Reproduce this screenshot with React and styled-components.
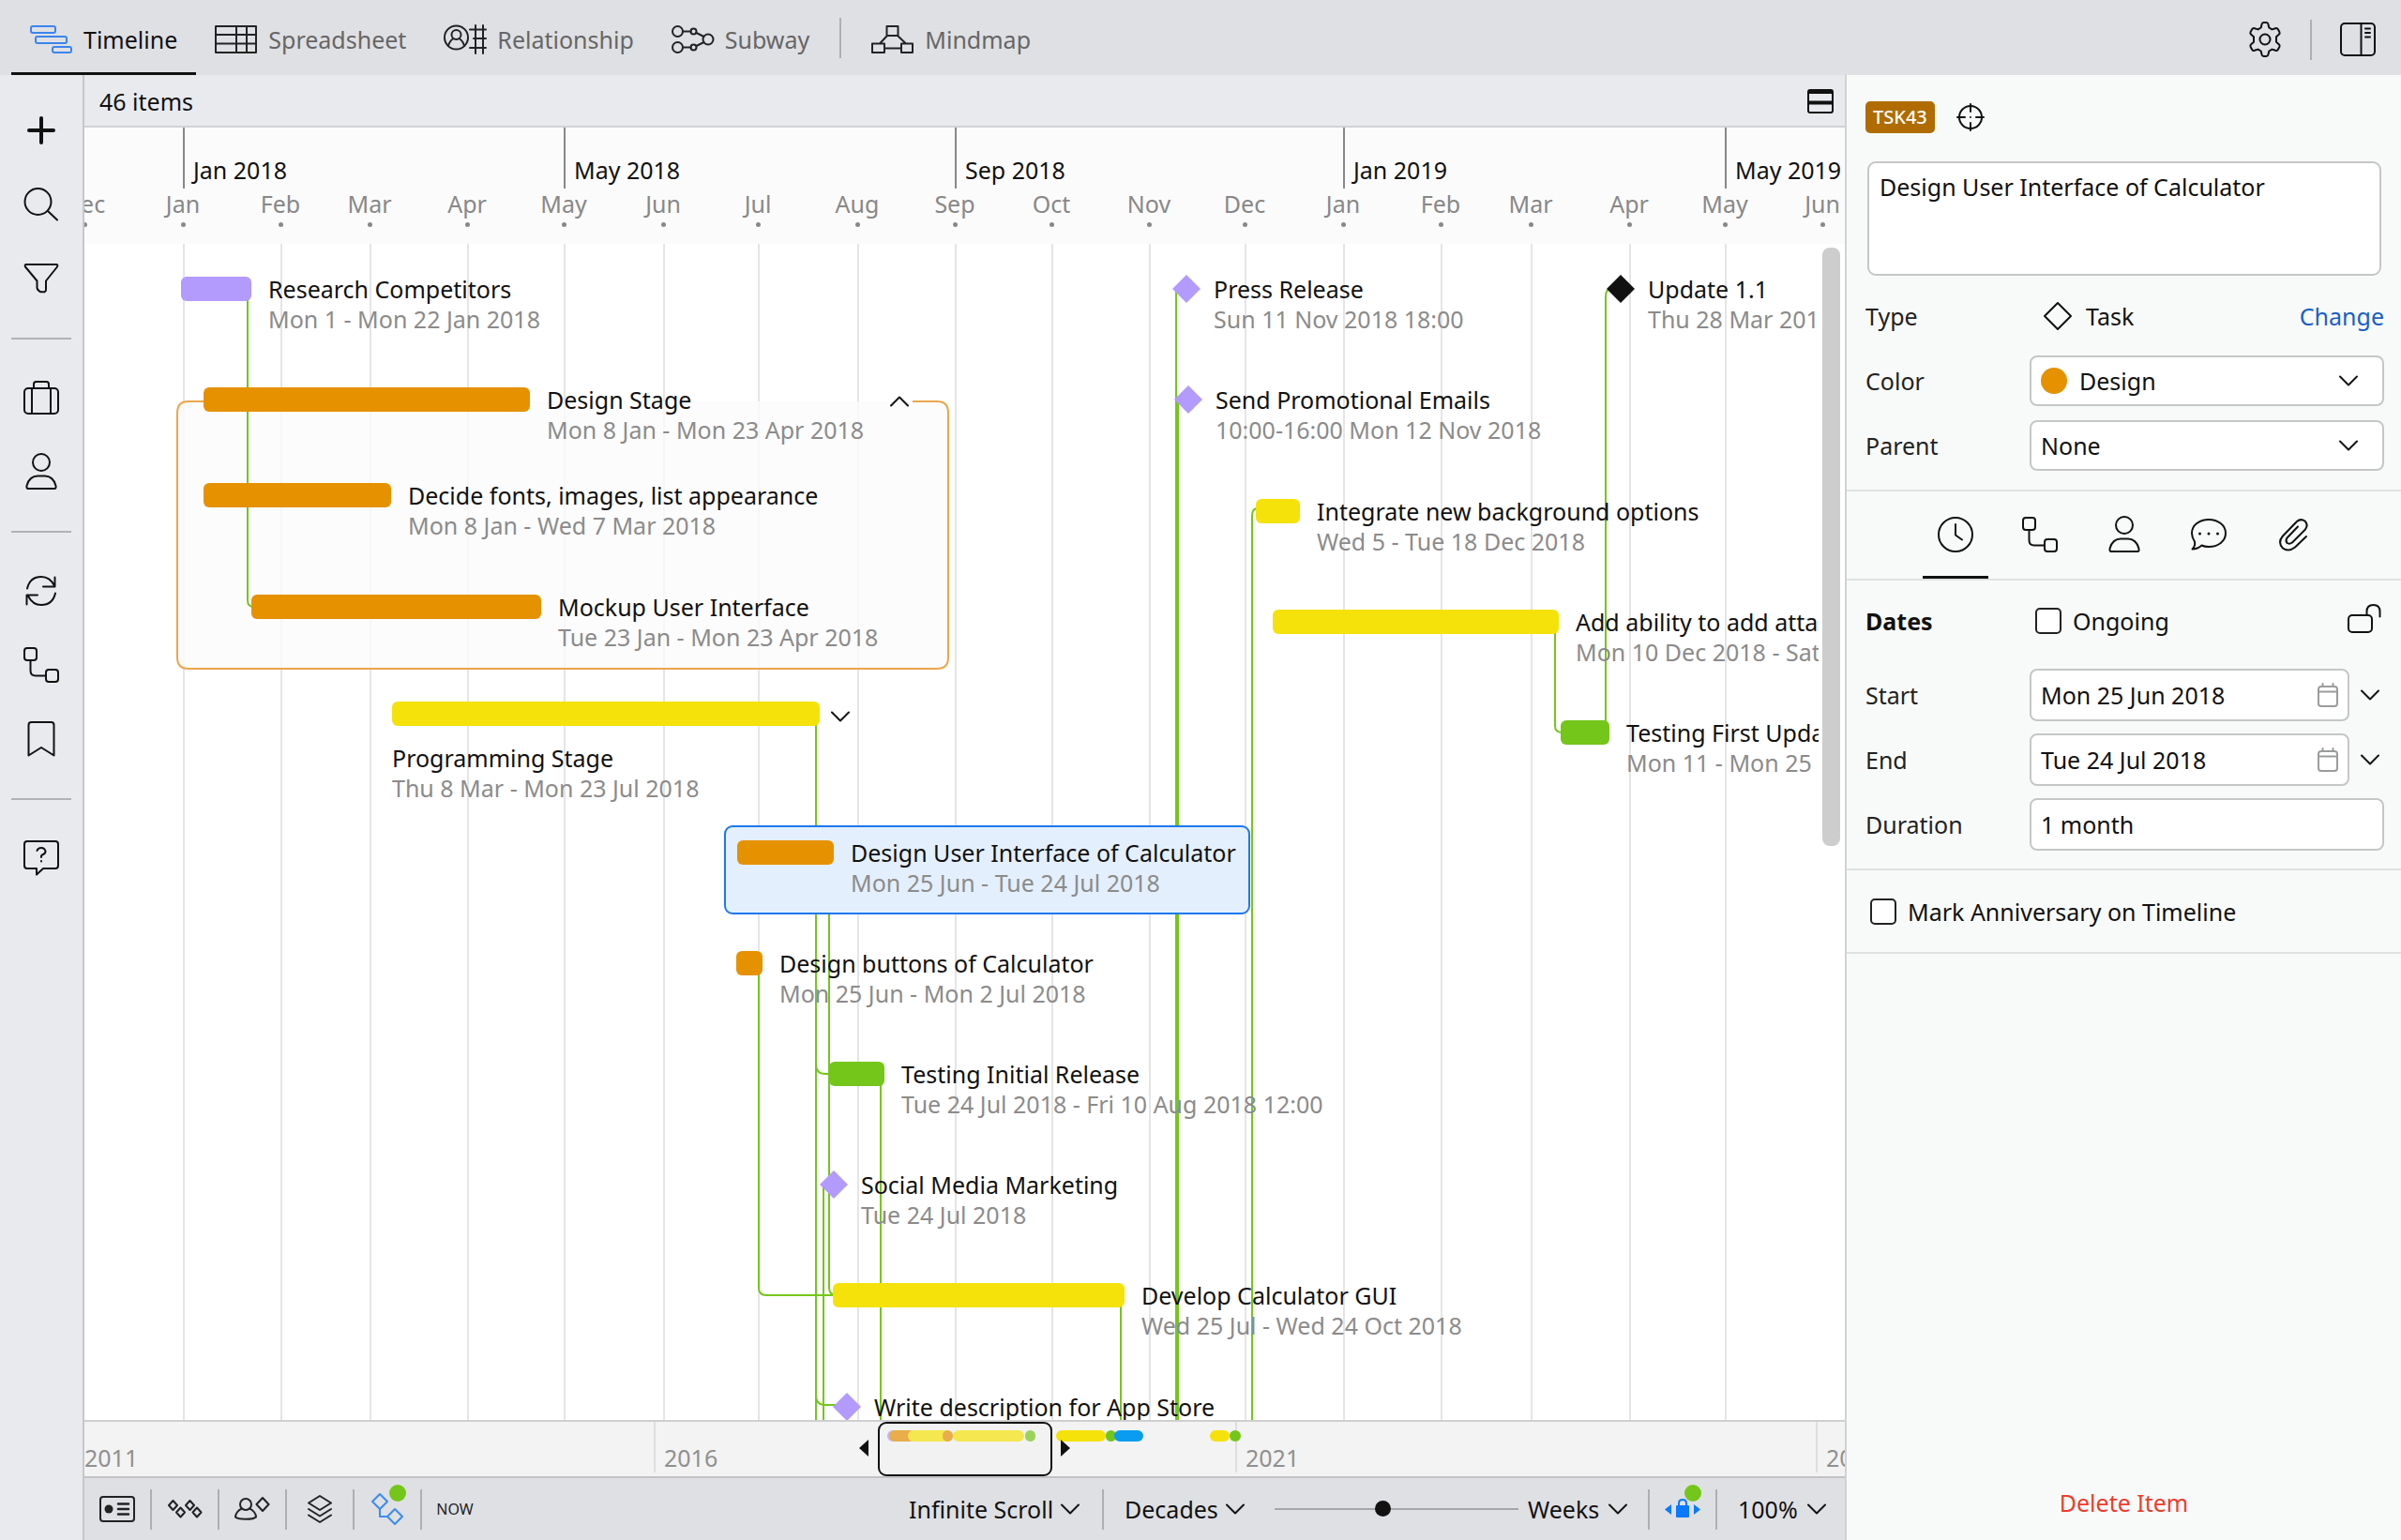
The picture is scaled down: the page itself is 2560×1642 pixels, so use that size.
import { useState } from 'react';
import styled, { createGlobalStyle, css } from 'styled-components';

const GlobalStyle = createGlobalStyle`
    * {
        box-sizing: border-box;
    }
    body {
        margin: 0;
        background: #f8faf9;
        color: #111;
        font-family: 'Noto Sans', 'Open Sans', sans-serif;
        font-size: 25px;
        line-height: 32px;
    }
    button,
    input,
    select,
    textarea {
        margin: 0;
        padding: 0;
        border: 0;
        background: transparent;
        color: inherit;
        font: inherit;
        outline: none;
    }
    button {
        cursor: pointer;
    }
    a {
        text-decoration: none;
    }
`;

const PURPLE = '#b39afd';
const ORANGE = '#e69100';
const YELLOW = '#f5e20a';
const GREEN = '#74c61b';
const BLUE = '#0a9cf0';
const BLACK = '#111';

/* ---------- data (x in px from the left edge of the plot) ---------- */

const quarters = [
    { x: 105, label: 'Jan 2018' },
    { x: 511, label: 'May 2018' },
    { x: 928, label: 'Sep 2018' },
    { x: 1342, label: 'Jan 2019' },
    { x: 1749, label: 'May 2019' },
];

const months = [
    { x: 0, label: 'Dec' },
    { x: 105, label: 'Jan' },
    { x: 209, label: 'Feb' },
    { x: 304, label: 'Mar' },
    { x: 408, label: 'Apr' },
    { x: 511, label: 'May' },
    { x: 617, label: 'Jun' },
    { x: 718, label: 'Jul' },
    { x: 824, label: 'Aug' },
    { x: 928, label: 'Sep' },
    { x: 1031, label: 'Oct' },
    { x: 1135, label: 'Nov' },
    { x: 1237, label: 'Dec' },
    { x: 1342, label: 'Jan' },
    { x: 1446, label: 'Feb' },
    { x: 1542, label: 'Mar' },
    { x: 1647, label: 'Apr' },
    { x: 1749, label: 'May' },
    { x: 1853, label: 'Jun' },
];

const items = [
    { x: 103, y: 32, w: 75, color: PURPLE, title: 'Research Competitors', date: 'Mon 1 - Mon 22 Jan 2018' },
    { x: 127, y: 150, w: 348, color: ORANGE, title: 'Design Stage', date: 'Mon 8 Jan - Mon 23 Apr 2018' },
    { x: 127, y: 252, w: 200, color: ORANGE, title: 'Decide fonts, images, list appearance', date: 'Mon 8 Jan - Wed 7 Mar 2018' },
    { x: 178, y: 371, w: 309, color: ORANGE, title: 'Mockup User Interface', date: 'Tue 23 Jan - Mon 23 Apr 2018' },
    { x: 328, y: 485, w: 456, color: YELLOW, below: true, title: 'Programming Stage', date: 'Thu 8 Mar - Mon 23 Jul 2018' },
    { x: 682, y: 620, w: 103, color: ORANGE, selected: true, title: 'Design User Interface of Calculator', date: 'Mon 25 Jun - Tue 24 Jul 2018' },
    { x: 695, y: 751, w: 28, color: ORANGE, title: 'Design buttons of Calculator', date: 'Mon 25 Jun - Mon 2 Jul 2018' },
    { x: 794, y: 869, w: 59, color: GREEN, title: 'Testing Initial Release', date: 'Tue 24 Jul 2018 - Fri 10 Aug 2018 12:00' },
    { x: 784, y: 987, color: PURPLE, title: 'Social Media Marketing', date: 'Tue 24 Jul 2018' },
    { x: 798, y: 1105, w: 311, color: YELLOW, title: 'Develop Calculator GUI', date: 'Wed 25 Jul - Wed 24 Oct 2018' },
    { x: 798, y: 1224, color: PURPLE, title: 'Write description for App Store' },
    { x: 1160, y: 32, color: PURPLE, title: 'Press Release', date: 'Sun 11 Nov 2018 18:00' },
    { x: 1162, y: 150, color: PURPLE, title: 'Send Promotional Emails', date: '10:00-16:00 Mon 12 Nov 2018' },
    { x: 1249, y: 269, w: 47, color: YELLOW, title: 'Integrate new background options', date: 'Wed 5 - Tue 18 Dec 2018' },
    { x: 1267, y: 387, w: 305, color: YELLOW, title: 'Add ability to add attachments', date: 'Mon 10 Dec 2018 - Sat 9 Mar 2019' },
    { x: 1574, y: 505, w: 52, color: GREEN, title: 'Testing First Update', date: 'Mon 11 - Mon 25 Mar 2019' },
    { x: 1623, y: 32, color: BLACK, title: 'Update 1.1', date: 'Thu 28 Mar 2019' },
];

const links = [
    'M174 48V380q0 7 7 7',
    'M780 500V1300',
    'M780 875q0 10 10 10h10',
    'M780 1228q0 10 10 10h12',
    'M794 650V1113q0 8 8 8',
    'M788 1003V1300',
    'M719 770V1113q0 8 8 8H800',
    'M849 884V1300',
    'M1105 1120V1300',
    'M1164 48V170',
    'M1245 1300V290q0-8 6-8',
    'M1568 400V514q0 7 8 7',
    'M1622 521V56q0-8 6-8',
];

const overviewYears = [
    { x: -11, label: '2011' },
    { x: 607, label: '2016' },
    { x: 1227, label: '2021' },
    { x: 1846, label: '2026' },
];

const overviewBars = [
    { x: 856, w: 14, color: PURPLE, faded: true },
    { x: 858, w: 28, color: ORANGE, faded: true },
    { x: 878, w: 46, color: YELLOW, faded: true },
    { x: 915, w: 11, color: ORANGE, faded: true },
    { x: 926, w: 76, color: YELLOW, faded: true },
    { x: 1003, w: 11, color: GREEN, faded: true },
    { x: 1036, w: 53, color: YELLOW },
    { x: 1089, w: 11, color: GREEN },
    { x: 1098, w: 31, color: BLUE },
    { x: 1200, w: 21, color: YELLOW },
    { x: 1221, w: 12, color: GREEN },
];

/* ---------- icons ---------- */

const Svg = styled.svg`
    display: block;
    flex: none;
    fill: none;
    stroke: currentColor;
    stroke-width: ${(p) => p.$stroke || 2};
    stroke-linecap: round;
    stroke-linejoin: round;
    overflow: visible;
`;

const Icon = ({ w, h, stroke, children, ...rest }) => (
    <Svg width={w} height={h} viewBox={`0 0 ${w} ${h}`} $stroke={stroke} aria-hidden="true" {...rest}>
        {children}
    </Svg>
);

const TimelineIcon = () => (
    <Icon w={45} h={30} color="#3b84ee">
        <rect x="1" y="1" width="26" height="7" rx="2" />
        <rect x="6" y="12" width="33" height="7" rx="2" />
        <rect x="24" y="23" width="20" height="6" rx="2" />
    </Icon>
);

const SpreadsheetIcon = () => (
    <Icon w={45} h={30}>
        <path d="M1 1h43v28H1zM1 10h43M1 19.500h43M23 1v28M34 1v28" />
    </Icon>
);

const RelationshipIcon = () => (
    <Icon w={45} h={30}>
        <circle cx="13.500" cy="13" r="12.500" />
        <circle cx="13.500" cy="10" r="5" />
        <path d="M5 22c1-5 4-7 5.500-8M22 22c-1-5-4-7-5.500-8M34 0v30M42 0v30M28 4.500h17M32 14h13M28 24h17" />
    </Icon>
);

const SubwayIcon = () => (
    <Icon w={45} h={30}>
        <circle cx="6.500" cy="6.500" r="5.500" />
        <circle cx="6.500" cy="23.500" r="5.500" />
        <circle cx="23.500" cy="6.500" r="3" />
        <circle cx="23.500" cy="23.500" r="3" />
        <circle cx="39" cy="15" r="5.500" />
        <path d="M12 6.500h8.500M12 23.500h8.500M26.500 8l8 4M26.500 22l8-4" />
    </Icon>
);

const MindmapIcon = () => (
    <Icon w={45} h={30}>
        <path d="M16.500 1h12v10h-12zM1 19.500h13v9.500H1zM32 19.500h12v9.500H32zM14 24.500h18M17 11l-8 8.500M28 11l9 8.500" />
    </Icon>
);

const GearIcon = () => (
    <Icon w={36} h={38}>
        <circle cx="18" cy="19" r="5.500" />
        <path d="M14.500 3q.5-2 2-2h3q1.500 0 2 2l.8 3.500 3.200 1.900 3.600-1.200q1.800-.5 2.600.9l1.700 3q.8 1.500-.6 2.700L30 16.200v5.600l2.800 2.400q1.400 1.200.6 2.700l-1.700 3q-.8 1.400-2.600.9l-3.600-1.200-3.200 1.900-.8 3.500q-.5 2-2 2h-3q-1.500 0-2-2l-.8-3.500-3.200-1.900-3.600 1.200q-1.800.5-2.600-.9l-1.700-3q-.8-1.500.6-2.700L6 21.800v-5.600l-2.800-2.400q-1.400-1.200-.6-2.700l1.700-3q.8-1.400 2.600-.9l3.600 1.200 3.200-1.900z" />
    </Icon>
);

const PanelIcon = () => (
    <Icon w={38} h={36}>
        <rect x="1" y="1" width="36" height="34" rx="4" />
        <path d="M22.500 1v34M27 6.500h5M27 11h5M27 15.500h5" />
    </Icon>
);

const PlusIcon = () => (
    <Icon w={30} h={30} stroke={4}>
        <path d="M15 2v26M2 15h26" />
    </Icon>
);

const SearchIcon = () => (
    <Icon w={38} h={37}>
        <circle cx="15.500" cy="16" r="14" />
        <path d="M26 26l10 9.500" />
    </Icon>
);

const FilterIcon = () => (
    <Icon w={38} h={34}>
        <path d="M3 2h32q2 0 1 2.500L24 19.500V29q0 1.500-1.500 2.300h-4Q15 29.500 14.500 27v-7.500L2 4.500Q1 2 3 2z" />
    </Icon>
);

const BriefcaseIcon = () => (
    <Icon w={38} h={36}>
        <rect x="1" y="8" width="36" height="27" rx="4" />
        <path d="M9 8v27M29 8v27M11 8V3.500Q11 1 13.500 1h11Q27 1 27 3.500V8" />
    </Icon>
);

const PersonIcon = () => (
    <Icon w={34} h={40}>
        <circle cx="17" cy="10" r="9" />
        <path d="M3 38h28q2 0 1.500-3C31 28 26 24.500 21 24.500h-8C8 24.500 3 28 1.500 35 1 38 3 38 3 38z" />
    </Icon>
);

const SyncIcon = () => (
    <Icon w={34} h={34}>
        <path d="M2 14.500C4 6 10 2 17 2c6 0 11 3.500 14 9.500M31.500 2.500v10H19M32 19.500C30 28 24 32 17 32c-6 0-11-3.500-14-9.500M1.500 31.500v-10H13" />
    </Icon>
);

const LinkIcon = () => (
    <Icon w={38} h={38}>
        <rect x="1" y="1" width="13" height="13" rx="3" />
        <rect x="24" y="24" width="13" height="13" rx="3" />
        <path d="M7.500 14v11q0 5.500 5.500 5.500h11" />
    </Icon>
);

const BookmarkIcon = () => (
    <Icon w={30} h={38}>
        <path d="M1.500 36.500V4q0-3 3-3h21q3 0 3 3v32.500L15 28z" />
    </Icon>
);

const HelpIcon = () => (
    <Icon w={38} h={38}>
        <path d="M4 1h30q3 0 3 3v23q0 3-3 3H21l-7 6.500V30H4q-3 0-3-3V4q0-3 3-3z" />
        <path d="M14.500 11q1-3 4.500-3t4.500 3.500q0 2.500-2.500 3.500t-2 3M19 22v.5" />
    </Icon>
);

const LayoutIcon = () => (
    <Icon w={28} h={26}>
        <rect x="1" y="1" width="26" height="24" rx="2" />
        <path d="M2 3h24M1 14.500h26" strokeWidth="4" strokeLinecap="butt" />
    </Icon>
);

const Chevron = ({ up }) => (
    <Icon w={20} h={10}>
        <path d={up ? 'M1 9.500l9-9 9 9' : 'M1 .5l9 9 9-9'} />
    </Icon>
);

const TargetIcon = () => (
    <Icon w={30} h={30}>
        <circle cx="15" cy="15" r="12" />
        <path d="M15 1v8M15 21v8M1 15h8M21 15h8M15 15v.1" />
    </Icon>
);

const DiamondIcon = () => (
    <Icon w={30} h={30}>
        <path d="M15 1l14 14-14 14L1 15z" />
    </Icon>
);

const ClockIcon = () => (
    <Icon w={38} h={38}>
        <circle cx="19" cy="19" r="18" />
        <path d="M19 8v11.500l7 5" />
    </Icon>
);

const ChatIcon = () => (
    <Icon w={38} h={36}>
        <path d="M4 25.500C2 22.500 1 20 1 16.500 1 8 9 2 19 2s18 6 18 14.500S29 31 19 31c-3 0-5.500-.5-7.500-1.500Q7 33.500 1.500 33.500 5 30 4 25.500z" />
        <path d="M9.500 17v.1M19 17v.1M28.500 17v.1" strokeWidth="3" />
    </Icon>
);

const ClipIcon = () => (
    <Icon w={32} h={36}>
        <path d="M30 20L18 31.500q-7 5.500-13 1-6-6 0-13L20 4q4-3.500 8.500-.5 4 4 .5 9L15 26.500q-3 2-5.500.5-2-2.500 0-5.500L21 9.500" />
    </Icon>
);

const UnlockIcon = () => (
    <Icon w={36} h={32}>
        <rect x="1" y="12" width="25" height="18" rx="4" />
        <path d="M20.500 12V8q0-7 7-7t7 7v5.500" />
    </Icon>
);

const CalendarIcon = () => (
    <Icon w={22} h={26} color="#9a9c9d">
        <rect x="1" y="4" width="20" height="21" rx="3" />
        <path d="M1 9.500h20M5.500 1v3M16.500 1v3" />
    </Icon>
);

const CardIcon = () => (
    <Icon w={38} h={28}>
        <rect x="1" y="1" width="36" height="26" rx="3" />
        <circle cx="10" cy="14" r="4.500" fill="currentColor" stroke="none" />
        <path d="M20 8.500h11M20 14h11M20 19.500h11" strokeWidth="2.500" />
    </Icon>
);

const ItemsIcon = () => (
    <Icon w={36} h={20}>
        <path d="M5.500 1L10 6l-4.500 5L1 6zM13.500 8.500l4.500 5-4.500 5-4.500-5zM23.500 1L28 6l-4.500 5L19 6zM31 8.500l4.500 5-4.500 5-4.500-5z" />
    </Icon>
);

const AssigneeIcon = () => (
    <Icon w={38} h={26}>
        <circle cx="12" cy="8" r="6" />
        <path d="M8 12.500C4 14 1 18 1 21.500c3 3 19 3 22 0 0-3.500-3-7.500-7-9M30 1l6.500 7L30 15l-6.500-7z" />
    </Icon>
);

const StackIcon = () => (
    <Icon w={28} h={32}>
        <path d="M14 2l12 7.500L14 17 2 9.500zM2 16l12 7.500L26 16M2 22.500L14 30l12-7.500" />
    </Icon>
);

const DependencyIcon = () => (
    <Icon w={34} h={34} color="#3b8af5">
        <path d="M9 1l8 8-8 8-8-8zM25 17l8 8-8 8-8-8zM9 17v8h8" />
    </Icon>
);

const LockRangeIcon = () => (
    <Icon w={40} h={22} color="#0a78ff">
        <path d="M8 6v11l-7-5.500zM32 6v11l7-5.500z" fill="currentColor" stroke="none" />
        <rect x="13" y="7" width="14" height="13" rx="1" fill="currentColor" stroke="none" />
        <path d="M16 7V5q0-4 4-4t4 4v2" />
    </Icon>
);

/* ---------- shell ---------- */

const Page = styled.div`
    display: flex;
    flex-direction: column;
    height: 100vh;
`;

const TopBar = styled.header`
    display: flex;
    align-items: center;
    flex: none;
    height: 80px;
    padding: 0 27px 0 12px;
    background: #dfe0e4;
`;

const Views = styled.nav`
    display: flex;
    align-items: center;
    flex: 1;
`;

const ViewTab = styled.button`
    display: flex;
    align-items: center;
    gap: 12px;
    height: 80px;
    padding: 7px 20px 0;
    border-bottom: 3px solid transparent;
    color: #666;

    ${Svg} {
        color: #222;
    }
    ${(p) =>
        p.$active &&
        css`
            border-color: #111;
            color: #111;
            ${Svg} {
                color: #3b84ee;
            }
        `}
`;

const Separator = styled.span`
    flex: none;
    width: 2px;
    height: 43px;
    margin: 0 ${(p) => p.$gap || 0}px;
    background: #aeafb2;
`;

const TopActions = styled.div`
    display: flex;
    align-items: center;
    gap: 30px;
    padding-top: 4px;
`;

const Body = styled.div`
    display: flex;
    flex: 1;
    min-height: 0;
`;

const Sidebar = styled.aside`
    flex: none;
    width: 90px;
    padding-top: 19px;
    border-right: 2px solid #c6c7ca;
    background: #e8eaed;
`;

const SideButton = styled.button`
    display: flex;
    align-items: center;
    justify-content: center;
    width: 100%;
    height: 79px;
`;

const SideRule = styled.hr`
    height: 2px;
    margin: 24px 12px 22px;
    border: 0;
    background: #b1b2b5;
`;

const Main = styled.main`
    display: flex;
    flex-direction: column;
    flex: 1;
    min-width: 0;
    background: #fff;
`;

const CountBar = styled.div`
    display: flex;
    align-items: center;
    justify-content: space-between;
    flex: none;
    height: 56px;
    padding: 2px 12px 0 16px;
    border-bottom: 2px solid #d1d2d4;
    background: #e9eaee;
`;

/* ---------- time axis ---------- */

const Axis = styled.div`
    position: relative;
    flex: none;
    height: 124px;
    background: #fbfbfb;
    overflow: hidden;
`;

const Quarter = styled.div`
    position: absolute;
    top: 0;
    left: ${(p) => p.$x}px;
    height: 65px;
    padding: 29px 0 0 9px;
    border-left: 2px solid #888;
    white-space: nowrap;
`;

const Month = styled.div`
    position: absolute;
    top: 65px;
    left: ${(p) => p.$x - 40}px;
    width: 80px;
    color: #888;
    text-align: center;

    &::after {
        content: '';
        display: block;
        width: 5px;
        height: 5px;
        margin: 4px auto;
        border-radius: 50%;
        background: #888;
    }
`;

/* ---------- plot ---------- */

const PlotRow = styled.div`
    display: flex;
    flex: 1;
    min-height: 0;
`;

const Plot = styled.div`
    position: relative;
    flex: 1;
    overflow: hidden;
`;

const GridLine = styled.i`
    position: absolute;
    top: 0;
    bottom: 0;
    left: ${(p) => p.$x}px;
    width: 2px;
    background: #e5e5e5;
`;

const LinkLayer = styled.svg`
    position: absolute;
    inset: 0;
    width: 100%;
    height: 100%;
    fill: none;
    stroke: ${GREEN};
    stroke-width: 2;
`;

const Item = styled.article`
    position: absolute;
    left: ${(p) => p.$x}px;
    top: ${(p) => p.$y}px;
    display: flex;
    align-items: flex-start;
    flex-direction: ${(p) => (p.$below ? 'column' : 'row')};
    gap: ${(p) => (p.$milestone ? 14 : 18)}px;
    white-space: nowrap;

    ${(p) =>
        p.$selected &&
        css`
            padding: 11px 13px 16px 12px;
            border: 2px solid #1a78f0;
            border-radius: 9px;
            background: #e4effd;
        `}
`;

const Bar = styled.div`
    flex: none;
    width: ${(p) => p.$w}px;
    height: 26px;
    margin-top: 3px;
    border-radius: 6px;
    background: ${(p) => p.$color};
`;

const Milestone = styled.div`
    flex: none;
    width: 30px;
    height: 30px;
    margin-top: 1px;
    background: ${(p) => p.$color};
    clip-path: polygon(50% 0, 100% 50%, 50% 100%, 0 50%);
`;

const ItemTitle = styled.h3`
    margin: 0;
    font-size: inherit;
    font-weight: 400;
`;

const ItemDate = styled.p`
    margin: 0;
    color: #8b8b8b;
`;

const Toggle = styled.button`
    position: absolute;
    left: ${(p) => p.$x}px;
    top: ${(p) => p.$y}px;
`;

const ScrollGutter = styled.div`
    flex: none;
    width: 28px;
    padding: 4px 5px 0 4px;
`;

const ScrollThumb = styled.div`
    height: 51%;
    border-radius: 8px;
    background: #cdcdcd;
`;

/* ---------- overview strip ---------- */

const Overview = styled.div`
    position: relative;
    flex: none;
    height: 62px;
    border-top: 2px solid #cfcfcf;
    border-bottom: 2px solid #c3c3c7;
    background: #f3f3f3;
    overflow: hidden;
`;

const Year = styled.div`
    position: absolute;
    top: 0;
    left: ${(p) => p.$x}px;
    height: 54px;
    padding: 22px 0 0 9px;
    border-left: 2px solid #dedede;
    color: #909090;
`;

const MiniBar = styled.div`
    position: absolute;
    top: 9px;
    left: ${(p) => p.$x}px;
    width: ${(p) => p.$w}px;
    height: 12px;
    border-radius: 6px;
    background: ${(p) => p.$color};
`;

const Viewport = styled.div`
    position: absolute;
    top: 0;
    left: 846px;
    width: 186px;
    height: 58px;
    border: 2px solid #111;
    border-radius: 9px;
    background: rgba(243, 243, 243, 0.3);
`;

const Handle = styled.i`
    position: absolute;
    top: 19px;
    left: ${(p) => p.$x}px;
    width: 10px;
    height: 18px;
    background: #111;
    clip-path: ${(p) => (p.$right ? 'polygon(0 0, 100% 50%, 0 100%)' : 'polygon(100% 0, 0 50%, 100% 100%)')};
`;

/* ---------- bottom toolbar ---------- */

const BottomBar = styled.footer`
    display: flex;
    align-items: center;
    flex: none;
    height: 66px;
    background: #dfe0e4;
`;

const BottomCell = styled.button`
    position: relative;
    display: flex;
    align-items: center;
    justify-content: center;
    flex: none;
    width: 72px;
    height: 43px;
    border-right: 2px solid #aeafb2;
    color: #222;
`;

const StatusDot = styled.i`
    position: absolute;
    top: -5px;
    left: 37px;
    width: 18px;
    height: 18px;
    border-radius: 50%;
    background: ${GREEN};
`;

const NowButton = styled.button`
    width: 70px;
    color: #222;
    font-size: 16px;
`;

const Spacer = styled.div`
    flex: 1;
`;

const Picker = styled.label`
    display: grid;
    align-items: center;
    margin: 0 ${(p) => p.$right}px 0 ${(p) => p.$left}px;

    select {
        grid-area: 1 / 1;
        width: ${(p) => p.$w}px;
        appearance: none;
    }
    ${Svg} {
        grid-area: 1 / 1;
        justify-self: end;
        pointer-events: none;
    }
`;

const ZoomSlider = styled.input`
    width: 260px;
    height: 20px;
    appearance: none;

    &::-webkit-slider-runnable-track {
        height: 2px;
        background: #a5a6a9;
    }
    &::-webkit-slider-thumb {
        width: 17px;
        height: 17px;
        margin-top: -8px;
        appearance: none;
        border-radius: 50%;
        background: #111;
    }
`;

/* ---------- inspector ---------- */

const Inspector = styled.aside`
    display: flex;
    flex-direction: column;
    flex: none;
    width: 593px;
    border-left: 2px solid #d0d2d3;
    background: #f8faf9;
`;

const Section = styled.section`
    padding: ${(p) => p.$pad};
    border-bottom: 2px solid #dfe2e2;
`;

const BadgeRow = styled.div`
    display: flex;
    align-items: center;
    gap: 23px;
    height: 34px;
    margin-bottom: 30px;
`;

const Badge = styled.span`
    padding: 0 8px;
    border-radius: 5px;
    background: #b06c00;
    color: #fff;
    font-size: 20px;
    font-weight: 500;
    line-height: 34px;
`;

const TitleField = styled.textarea`
    display: block;
    width: 548px;
    height: 122px;
    margin: 0 0 8px 2px;
    padding: 9px 11px;
    border: 2px solid #c5c7c7;
    border-radius: 9px;
    background: #fff;
    resize: none;
`;

const Field = styled.div`
    display: flex;
    align-items: center;
    height: 69px;
`;

const FieldLabel = styled.label`
    flex: none;
    width: 175px;
    color: #222;
`;

const SectionTitle = styled.h2`
    flex: none;
    width: 175px;
    margin: 0;
    font-size: inherit;
    font-weight: 700;
`;

const TypeValue = styled.span`
    display: flex;
    flex: 1;
    align-items: center;
    gap: 15px;
    padding-left: 15px;
`;

const Change = styled.a`
    color: #1a5fc8;
`;

const Box = styled.div`
    display: flex;
    align-items: center;
    flex: 1;
    min-width: 0;
    height: ${(p) => p.$h || 54}px;
    padding: 0 10px;
    border: 2px solid #c5c7c7;
    border-radius: 8px;
    background: #fff;

    input,
    select {
        flex: 1;
        min-width: 0;
        height: 100%;
        appearance: none;
    }
`;

const SelectArrow = styled.span`
    margin: 0 16px 0 -34px;
    pointer-events: none;
`;

const Swatch = styled.i`
    flex: none;
    width: 28px;
    height: 28px;
    margin-right: 13px;
    border-radius: 50%;
    background: ${ORANGE};
`;

const ChevronButton = styled.button`
    padding: 10px 5px 10px 12px;
`;

const LockButton = styled.button`
    padding: 0 3px 4px 0;
`;

const Tabs = styled.div`
    display: flex;
    justify-content: center;
    gap: 20px;
    height: 95px;
    border-bottom: 2px solid #dfe2e2;
`;

const InspectorTab = styled.button`
    display: flex;
    align-items: center;
    justify-content: center;
    width: 70px;
    padding-top: 1px;
    border-bottom: 3px solid ${(p) => (p.$active ? '#111' : 'transparent')};
`;

const DatesRow = styled.div`
    display: flex;
    align-items: center;
    height: 68px;
    margin-bottom: 10px;
`;

const CheckLabel = styled.label`
    display: flex;
    align-items: center;
    flex: 1;
    gap: 12px;
    padding-left: 6px;

    input {
        flex: none;
        width: 28px;
        height: 28px;
        appearance: none;
        border: 2px solid #222;
        border-radius: 5px;
        background: #fff;
    }
    input:checked {
        background: #222;
    }
`;

const InspectorFoot = styled.div`
    display: flex;
    flex: 1;
    align-items: flex-end;
    justify-content: center;
    padding-bottom: 24px;
`;

const DeleteButton = styled.button`
    color: #ee3c2f;
`;

const views = [
    { label: 'Timeline', icon: <TimelineIcon /> },
    { label: 'Spreadsheet', icon: <SpreadsheetIcon /> },
    { label: 'Relationship', icon: <RelationshipIcon /> },
    { label: 'Subway', icon: <SubwayIcon /> },
];

function TopNav() {
    return (
        <TopBar>
            <Views>
                {views.map((view, i) => (
                    <ViewTab key={view.label} $active={i === 0}>
                        {view.icon}
                        {view.label}
                    </ViewTab>
                ))}
                <Separator $gap={12} />
                <ViewTab>
                    <MindmapIcon />
                    Mindmap
                </ViewTab>
            </Views>
            <TopActions>
                <button aria-label="Settings">
                    <GearIcon />
                </button>
                <Separator />
                <button aria-label="Toggle inspector">
                    <PanelIcon />
                </button>
            </TopActions>
        </TopBar>
    );
}

function SideNav() {
    return (
        <Sidebar>
            <SideButton aria-label="Add"><PlusIcon /></SideButton>
            <SideButton aria-label="Search"><SearchIcon /></SideButton>
            <SideButton aria-label="Filter"><FilterIcon /></SideButton>
            <SideRule />
            <SideButton aria-label="Projects"><BriefcaseIcon /></SideButton>
            <SideButton aria-label="People"><PersonIcon /></SideButton>
            <SideRule />
            <SideButton aria-label="Sync"><SyncIcon /></SideButton>
            <SideButton aria-label="Dependencies"><LinkIcon /></SideButton>
            <SideButton aria-label="Bookmarks"><BookmarkIcon /></SideButton>
            <SideRule />
            <SideButton aria-label="Help"><HelpIcon /></SideButton>
        </Sidebar>
    );
}

function Timeline() {
    return (
        <>
            <Axis>
                {quarters.map((q) => (
                    <Quarter key={q.label} $x={q.x}>{q.label}</Quarter>
                ))}
                {months.map((m) => (
                    <Month key={m.x} $x={m.x}>{m.label}</Month>
                ))}
            </Axis>
            <PlotRow>
                <Plot>
                    {months.slice(1, -1).map((m) => (
                        <GridLine key={m.x} $x={m.x} />
                    ))}
                    <LinkLayer aria-hidden="true">
                        <rect x="99" y="168" width="822" height="285" rx="12" fill="#fbfbfb" fillOpacity="0.8" stroke="none" />
                        <path d="M130 168H111q-12 0-12 12V441q0 12 12 12H909q12 0 12-12V180q0-12-12-12H883" stroke="#eba64b" />
                        {links.map((d) => (
                            <path key={d} d={d} />
                        ))}
                        <path d="M1165 167V1300" strokeWidth="4" />
                    </LinkLayer>
                    {items.map((item) => (
                        <Item
                            key={item.title}
                            $x={item.x}
                            $y={item.y}
                            $below={item.below}
                            $milestone={!item.w}
                            $selected={item.selected}
                        >
                            {item.w ? <Bar $w={item.w} $color={item.color} /> : <Milestone $color={item.color} />}
                            <div>
                                <ItemTitle>{item.title}</ItemTitle>
                                {item.date && <ItemDate>{item.date}</ItemDate>}
                            </div>
                        </Item>
                    ))}
                    <Toggle $x={859} $y={163} aria-label="Collapse Design Stage">
                        <Chevron up />
                    </Toggle>
                    <Toggle $x={796} $y={499} aria-label="Expand Programming Stage">
                        <Chevron />
                    </Toggle>
                </Plot>
                <ScrollGutter>
                    <ScrollThumb />
                </ScrollGutter>
            </PlotRow>
            <Overview>
                {overviewYears.map((y) => (
                    <Year key={y.label} $x={y.x}>{y.label}</Year>
                ))}
                {overviewBars.filter((b) => b.faded).map((b) => (
                    <MiniBar key={b.x} $x={b.x} $w={b.w} $color={b.color} />
                ))}
                <Viewport />
                {overviewBars.filter((b) => !b.faded).map((b) => (
                    <MiniBar key={b.x} $x={b.x} $w={b.w} $color={b.color} />
                ))}
                <Handle $x={826} />
                <Handle $x={1041} $right />
            </Overview>
        </>
    );
}

function Toolbar() {
    const [zoom, setZoom] = useState(44);
    return (
        <BottomBar>
            <BottomCell aria-label="Cards"><CardIcon /></BottomCell>
            <BottomCell aria-label="Items"><ItemsIcon /></BottomCell>
            <BottomCell aria-label="Assignees"><AssigneeIcon /></BottomCell>
            <BottomCell aria-label="Layers"><StackIcon /></BottomCell>
            <BottomCell aria-label="Dependencies">
                <DependencyIcon />
                <StatusDot />
            </BottomCell>
            <NowButton>NOW</NowButton>
            <Spacer />
            <Picker $w={182} $left={24} $right={24}>
                <select aria-label="Scroll mode"><option>Infinite Scroll</option></select>
                <Chevron />
            </Picker>
            <Separator />
            <Picker $w={128} $left={22} $right={32}>
                <select aria-label="Smallest zoom"><option>Decades</option></select>
                <Chevron />
            </Picker>
            <ZoomSlider
                type="range"
                aria-label="Zoom"
                value={zoom}
                onChange={(e) => setZoom(Number(e.target.value))}
            />
            <Picker $w={106} $left={10} $right={22}>
                <select aria-label="Largest zoom"><option>Weeks</option></select>
                <Chevron />
            </Picker>
            <Separator />
            <BottomCell aria-label="Lock range">
                <LockRangeIcon />
                <StatusDot />
            </BottomCell>
            <Picker $w={94} $left={22} $right={20}>
                <select aria-label="Text size"><option>100%</option></select>
                <Chevron />
            </Picker>
        </BottomBar>
    );
}

function ItemInspector() {
    const [title, setTitle] = useState('Design User Interface of Calculator');
    const [start, setStart] = useState('Mon 25 Jun 2018');
    const [end, setEnd] = useState('Tue 24 Jul 2018');
    const [duration, setDuration] = useState('1 month');

    return (
        <Inspector>
            <Section $pad="28px 18px 13px 20px">
                <BadgeRow>
                    <Badge>TSK43</Badge>
                    <button aria-label="Show on timeline"><TargetIcon /></button>
                </BadgeRow>
                <TitleField aria-label="Title" value={title} onChange={(e) => setTitle(e.target.value)} />
                <Field>
                    <FieldLabel as="span">Type</FieldLabel>
                    <TypeValue>
                        <DiamondIcon />
                        Task
                    </TypeValue>
                    <Change href="#type">Change</Change>
                </Field>
                <Field>
                    <FieldLabel htmlFor="color">Color</FieldLabel>
                    <Box>
                        <Swatch />
                        <select id="color"><option>Design</option></select>
                        <SelectArrow><Chevron /></SelectArrow>
                    </Box>
                </Field>
                <Field>
                    <FieldLabel htmlFor="parent">Parent</FieldLabel>
                    <Box>
                        <select id="parent"><option>None</option></select>
                        <SelectArrow><Chevron /></SelectArrow>
                    </Box>
                </Field>
            </Section>
            <Tabs>
                <InspectorTab $active aria-label="Dates"><ClockIcon /></InspectorTab>
                <InspectorTab aria-label="Dependencies"><LinkIcon /></InspectorTab>
                <InspectorTab aria-label="People"><PersonIcon /></InspectorTab>
                <InspectorTab aria-label="Comments"><ChatIcon /></InspectorTab>
                <InspectorTab aria-label="Attachments"><ClipIcon /></InspectorTab>
            </Tabs>
            <Section $pad="9px 18px 13px 20px">
                <DatesRow>
                    <SectionTitle>Dates</SectionTitle>
                    <CheckLabel>
                        <input type="checkbox" />
                        Ongoing
                    </CheckLabel>
                    <LockButton aria-label="Unlock dates"><UnlockIcon /></LockButton>
                </DatesRow>
                <Field>
                    <FieldLabel htmlFor="start">Start</FieldLabel>
                    <Box $h={56}>
                        <input id="start" value={start} onChange={(e) => setStart(e.target.value)} />
                        <button aria-label="Pick start date"><CalendarIcon /></button>
                    </Box>
                    <ChevronButton aria-label="Start options"><Chevron /></ChevronButton>
                </Field>
                <Field>
                    <FieldLabel htmlFor="end">End</FieldLabel>
                    <Box $h={56}>
                        <input id="end" value={end} onChange={(e) => setEnd(e.target.value)} />
                        <button aria-label="Pick end date"><CalendarIcon /></button>
                    </Box>
                    <ChevronButton aria-label="End options"><Chevron /></ChevronButton>
                </Field>
                <Field>
                    <FieldLabel htmlFor="duration">Duration</FieldLabel>
                    <Box $h={56}>
                        <input id="duration" value={duration} onChange={(e) => setDuration(e.target.value)} />
                    </Box>
                </Field>
            </Section>
            <Section $pad="28px 18px 27px 19px">
                <CheckLabel>
                    <input type="checkbox" />
                    Mark Anniversary on Timeline
                </CheckLabel>
            </Section>
            <InspectorFoot>
                <DeleteButton>Delete Item</DeleteButton>
            </InspectorFoot>
        </Inspector>
    );
}

export default function App() {
    return (
        <Page>
            <GlobalStyle />
            <TopNav />
            <Body>
                <SideNav />
                <Main>
                    <CountBar>
                        46 items
                        <button aria-label="Change layout"><LayoutIcon /></button>
                    </CountBar>
                    <Timeline />
                    <Toolbar />
                </Main>
                <ItemInspector />
            </Body>
        </Page>
    );
}
